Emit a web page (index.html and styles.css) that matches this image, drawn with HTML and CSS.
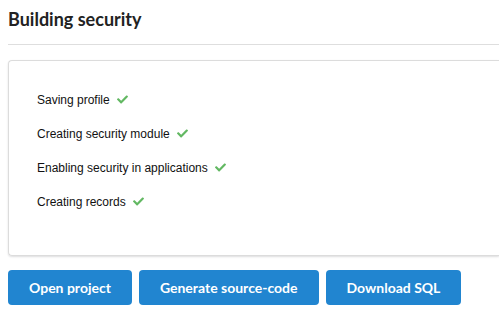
FILE: index.html
```html
<!DOCTYPE html>
<html lang="en">
<head>
    <meta charset="UTF-8">
    <title>Building security</title>
    <link rel="stylesheet" href="styles.css">
</head>
<body>

<div class="page">
    <h3 class="dividing-header">Building security</h3>

    <div class="segment">
        <ul class="steps">
            <li>Saving profile <svg class="check" viewBox="0 0 512 512"><path d="M173.9 439.4l-166.4-166.4c-10-10-10-26.2 0-36.2l36.2-36.2c10-10 26.2-10 36.2 0L192 312.7 432.1 72.6c10-10 26.2-10 36.2 0l36.2 36.2c10 10 10 26.2 0 36.2l-294.4 294.4c-10 10-26.2 10-36.2 0z"/></svg></li>
            <li>Creating security module <svg class="check" viewBox="0 0 512 512"><path d="M173.9 439.4l-166.4-166.4c-10-10-10-26.2 0-36.2l36.2-36.2c10-10 26.2-10 36.2 0L192 312.7 432.1 72.6c10-10 26.2-10 36.2 0l36.2 36.2c10 10 10 26.2 0 36.2l-294.4 294.4c-10 10-26.2 10-36.2 0z"/></svg></li>
            <li>Enabling security in applications <svg class="check" viewBox="0 0 512 512"><path d="M173.9 439.4l-166.4-166.4c-10-10-10-26.2 0-36.2l36.2-36.2c10-10 26.2-10 36.2 0L192 312.7 432.1 72.6c10-10 26.2-10 36.2 0l36.2 36.2c10 10 10 26.2 0 36.2l-294.4 294.4c-10 10-26.2 10-36.2 0z"/></svg></li>
            <li>Creating records <svg class="check" viewBox="0 0 512 512"><path d="M173.9 439.4l-166.4-166.4c-10-10-10-26.2 0-36.2l36.2-36.2c10-10 26.2-10 36.2 0L192 312.7 432.1 72.6c10-10 26.2-10 36.2 0l36.2 36.2c10 10 10 26.2 0 36.2l-294.4 294.4c-10 10-26.2 10-36.2 0z"/></svg></li>
        </ul>
    </div>

    <div class="actions">
        <button class="btn-primary">Open project</button>
        <button class="btn-primary">Generate source-code</button>
        <button class="btn-primary">Download SQL</button>
    </div>
</div>

</body>
</html>
```

FILE: styles.css
```css
:root {
    --primary: #2185d0;
    --text: #222222;
    --border: #dcdcdc;
    --ok: #62b862;
}
body {
    margin: 0;
    padding: 0 0 0 8px;
    font-family: Lato, sans-serif;
    background: #ffffff;
    color: var(--text);
}
.dividing-header {
    margin: 0;
    padding: 6px 0 11px;
    font-size: 18px;
    font-weight: 700;
    line-height: 1.5;
    border-bottom: 1px solid #dedede;
}
/* card runs on past the right edge of the window */
.segment {
    margin-top: 15px;
    padding: 23px 28px 25px;
    height: 146px;
    border: 1px solid var(--border);
    border-right: none;
    border-radius: 4px 0 0 4px;
    box-shadow: 0 1px 2px rgba(34,36,38,0.15);
}
.steps {
    list-style: none;
    margin: 0;
    padding: 0;
    font-family: "Liberation Sans", Arial, sans-serif;
    font-size: 12px;
    color: #111;
}
.steps li { height: 34px; line-height: 33px; }
.check {
    width: 11px;
    height: 11px;
    margin-left: 4px;
    fill: var(--ok);
    vertical-align: -1px;
}
.actions {
    display: flex;
    gap: 7px;
    margin-top: 14px;
}
.btn-primary {
    height: 35px;
    padding: 0 21px;
    background: var(--primary);
    color: #ffffff;
    border: none;
    border-radius: 4px;
    font-family: Lato, sans-serif;
    font-size: 14px;
    font-weight: 700;
    cursor: pointer;
}
```
